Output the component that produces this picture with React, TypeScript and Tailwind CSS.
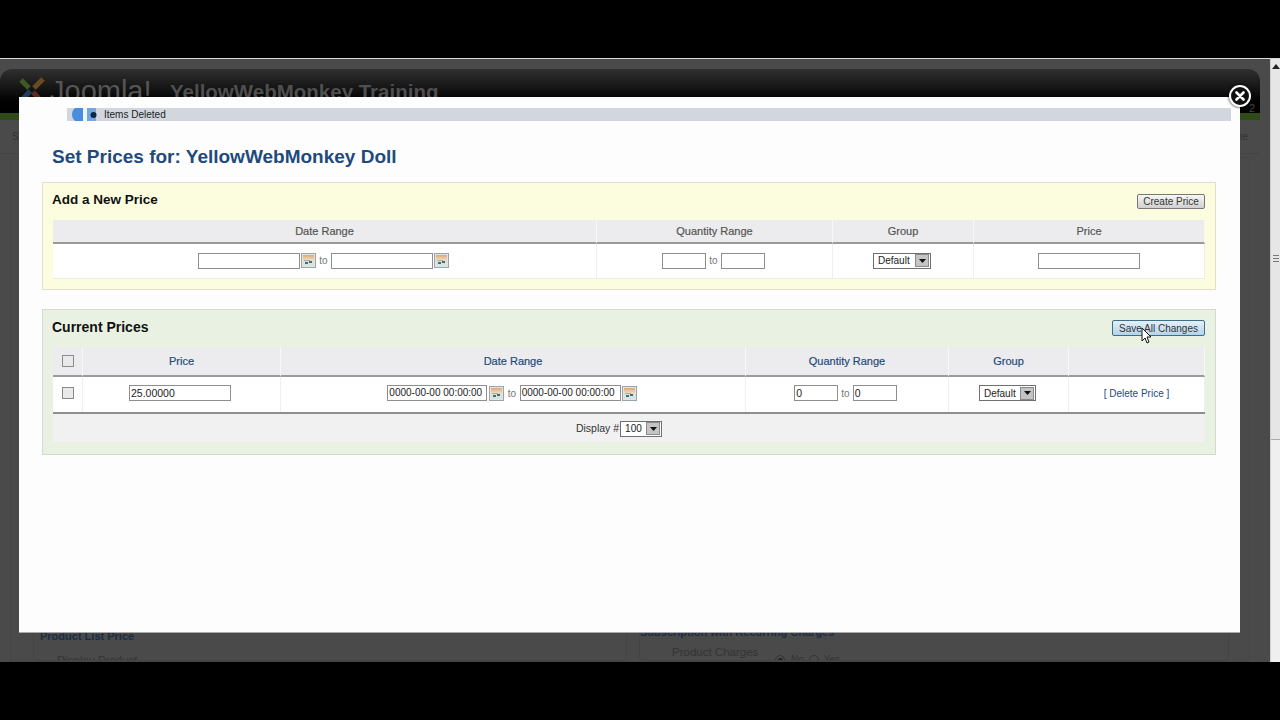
import React from "react";

const Cal = () => (
  <span className="inline-flex w-[15px] h-[15px] border border-[#98a4aa] bg-[#dfe5e8] items-center justify-center">
    <svg width="11" height="11" viewBox="0 0 11 11">
      <defs>
        <linearGradient id="calg" x1="0" y1="0" x2="0" y2="1">
          <stop offset="0" stopColor="#e2a76e" />
          <stop offset="0.45" stopColor="#ecdcc4" />
          <stop offset="1" stopColor="#cfe6ea" />
        </linearGradient>
      </defs>
      <rect x="0" y="0" width="11" height="11" fill="url(#calg)" />
      <rect x="1" y="5" width="6" height="1" fill="#a3aeb0" />
      <rect x="2" y="7" width="3" height="2" fill="#3f7177" />
      <rect x="6" y="6" width="3" height="2" fill="#3f7177" />
    </svg>
  </span>
);

const Select = ({ label, w }: { label: string; w: string }) => (
  <span className={`inline-flex items-center h-[16px] border border-[#6f6f6f] bg-white ${w} justify-between text-[10px] text-[#222] pl-[4px] pr-px`}>
    <span>{label}</span>
    <span className="w-[14px] h-[13px] bg-[#c4c4c4] border border-[#8a8a8a] flex items-center justify-center">
      <svg width="7" height="4" viewBox="0 0 7 4"><path d="M0 0h7L3.500 4z" fill="#111" /></svg>
    </span>
  </span>
);

const Input = ({ w, value, size }: { w: string; value?: string; size?: string }) => (
  <span className={`inline-flex items-center h-[16px] ${w} border border-[#8e8e8e] bg-white ${size ?? "text-[10.5px]"} text-[#222] pl-px leading-none`}>{value}</span>
);

const Check = () => <span className="inline-block w-[12px] h-[12px] border border-[#8a8a8a] bg-[#e9e9e9]" />;

const To = ({ m }: { m: string }) => <span className={`text-[10px] text-[#777] ${m}`}>to</span>;

const Th = ({ children, blue }: { children?: React.ReactNode; blue?: boolean }) => (
  <div className={`flex items-center justify-center bg-[#ececee] border-b-2 border-[#9a9a9a] border-r border-r-[#f7f7f7] h-full text-[11px] ${blue ? "text-[#1f4a7c]" : "text-[#555]"} [-webkit-text-stroke:0.2px]`}>{children}</div>
);

const Td = ({ children, up }: { children?: React.ReactNode; up?: boolean }) => (
  <div className={`flex items-center justify-center border-r border-[#efefef] bg-white ${up ? "pb-[3px]" : "pb-px"}`}>{children}</div>
);

export default function App() {
  return (
    <div className="relative w-[1280px] h-[720px] bg-black overflow-hidden font-['Liberation_Sans',Arial,sans-serif]">
      <div className="h-[58px]" />
      <div className="h-px bg-[#d8d8d8]" />
      <div className="flex h-[603px]">
        {/* dimmed page */}
        <div className="w-[1270px] bg-[#4a4a4a] flex flex-col overflow-hidden">
          <div className="h-[10px] shrink-0" />
          <div className="shrink-0 mr-[10px] h-[44px] rounded-t-[12px] bg-gradient-to-b from-[#303030] via-[#111] to-[#000] pt-[8px] pl-[17px] flex items-start text-[#4e4e4e]">
            <svg width="30" height="30" viewBox="0 0 30 30" className="shrink-0 -mt-[2px]">
              <path d="M4 5l8 8" stroke="#3d5a25" strokeWidth="5" fill="none" />
              <path d="M26 4l-9 9" stroke="#6b4a20" strokeWidth="5" fill="none" />
              <path d="M5 25l8-9" stroke="#1f3f5c" strokeWidth="5" fill="none" />
              <path d="M24 26l-8-9" stroke="#5c2a20" strokeWidth="5" fill="none" />
            </svg>
            <span className="ml-[3px] w-[120px] text-[29px] leading-[28px] text-[#555]">Joomla!</span>
            <span className="text-[20.5px] leading-[30px] font-bold text-[#4f4f4f]">YellowWebMonkey Training</span>
            <span className="ml-auto mr-[5px] mt-[24px] flex gap-[46px] text-[11px] leading-[14px] text-[#444]"><span>M</span><span>2</span></span>
          </div>
          <div className="shrink-0 mr-[10px] h-[7px] bg-[#2f4a16]" />
          <div className="shrink-0 h-[34px] mr-[10px] border-b border-[#444] flex justify-between items-center px-[12px] text-[10px] text-[#333]">
            <span>S</span><span>ne</span>
          </div>
          <div className="flex-1 min-h-0 ml-[10px] mr-[20px] mt-[3px] border border-[#454545] rounded-t-[5px] flex gap-[12px] pl-[22px] pt-[6px] overflow-hidden">
            <div className="w-[594px] border border-[#444] rounded-[4px] flex flex-col justify-end pl-[6px] overflow-hidden">
              <div className="text-[11px] font-bold text-[#1c2d42] leading-[14px]">Product List Price</div>
              <div className="text-[11.5px] text-[#333] pl-[17px] pt-[10px] leading-[14px] -mb-[7px]">Display Product</div>
            </div>
            <div className="w-[590px] border border-[#444] rounded-[4px] flex flex-col justify-end overflow-hidden">
              <div className="text-[11px] font-bold text-[#1c2d42] leading-[14px]">Subscription with Recurring Charges</div>
              <div className="text-[11.5px] text-[#333] leading-[14px] flex items-start pl-[32px] pt-[6px] -mb-[7px]">
                <span className="w-[103px]">Product Charges</span>
                <span className="flex items-center text-[10px] mt-[8px]">
                  <span className="w-[10px] h-[10px] rounded-full border border-[#333] flex items-center justify-center"><span className="w-[5px] h-[5px] rounded-full bg-[#222]" /></span>
                  <span className="ml-[6px]">No</span>
                  <span className="w-[10px] h-[10px] rounded-full border border-[#333] ml-[5px]" />
                  <span className="ml-[5px]">Yes</span>
                </span>
              </div>
            </div>
          </div>
        </div>
        {/* scrollbar */}
        <div className="w-[10px] bg-[#efefef] border-l border-[#cfcfcf] flex flex-col">
          <div className="h-[381px] bg-[#e6e6e6] border-b border-[#aaa] flex flex-col items-center pt-[5px] relative">
            <svg width="8" height="5" viewBox="0 0 8 5"><path d="M0 5h8L4 0z" fill="#222" /></svg>
            <div className="absolute top-[196px] left-[2px] w-[6px] h-[7px] flex flex-col justify-between">
              <span className="h-px bg-[#777]" /><span className="h-px bg-[#777]" /><span className="h-px bg-[#777]" />
            </div>
          </div>
        </div>
      </div>

      {/* modal */}
      <div className="absolute left-[19px] top-[97px] w-[1221px] h-[535px] bg-[#fdfdfd] shadow-[0_1px_0_#aaa] flex flex-col">
        <div className="ml-[48px] mr-[9px] mt-[11px] h-[13px] bg-[#d2d7df] flex items-center text-[10px] text-[#222] shrink-0">
          <svg width="26" height="13" viewBox="0 0 26 13" className="ml-[5px]">
            <path d="M3 0h8v13H3C1 11 0 9 0 6.500S1 2 3 0z" fill="#4a8de0" />
            <rect x="11" y="0" width="4" height="13" fill="#f2f6fc" />
            <rect x="15" y="0" width="5" height="13" fill="#6fa8e6" />
            <path d="M20 0h4v13h-4z" fill="#7fa6d6" />
            <circle cx="21.500" cy="7" r="3" fill="#10253f" />
          </svg>
          <span className="ml-[6px]">Items Deleted</span>
        </div>
        <h1 className="ml-[33px] mt-[24px] text-[19px] leading-[24px] font-bold text-[#1f4a7c] shrink-0">Set Prices for: YellowWebMonkey Doll</h1>

        {/* Add */}
        <section className="ml-[23px] mr-[24px] mt-[13px] h-[108px] bg-[#fcfcdf] border border-[#e2e0c8] px-[10px] flex flex-col shrink-0">
          <div className="h-[37px] flex items-center justify-between">
            <span className="text-[13.5px] font-bold text-[#111] -mt-[3px] -ml-px">Add a New Price</span>
            <span className="h-[15px] w-[68px] rounded-[2px] border border-[#777] bg-gradient-to-b from-[#f7f7f7] to-[#d0d0d0] text-[10px] text-[#333] flex items-center justify-center -mt-[1px]">Create Price</span>
          </div>
          <div className="grid grid-cols-[544px_236px_141px_231px] grid-rows-[24px_34px] border-b border-[#ececec]">
            <Th>Date Range</Th><Th>Quantity Range</Th><Th>Group</Th><Th>Price</Th>
            <Td><span className="flex -ml-[2px]"><Input w="w-[102px]" /></span><span className="flex ml-px"><Cal /></span><To m="mx-[3px]" /><Input w="w-[102px]" /><span className="flex ml-px"><Cal /></span></Td>
            <Td><span className="flex -ml-[2px]"><Input w="w-[44px]" /></span><To m="mx-[3px]" /><Input w="w-[44px]" /></Td>
            <Td><span className="flex -ml-[2px]"><Select label="Default" w="w-[58px]" /></span></Td>
            <Td><Input w="w-[102px]" /></Td>
          </div>
        </section>

        {/* Current */}
        <section className="ml-[23px] mr-[24px] mt-[19px] h-[146px] bg-[#e9f1e2] border border-[#d5d9d0] px-[10px] flex flex-col shrink-0">
          <div className="h-[37px] flex items-center justify-between">
            <span className="text-[14px] font-bold text-[#111] -mt-[3px] -ml-px">Current Prices</span>
            <span className="relative h-[16px] w-[93px] rounded-[2px] border border-[#3c6f8c] bg-gradient-to-b from-[#e4f0f8] to-[#b5d3e8] text-[10px] text-[#333] flex items-center justify-center -mt-[1px]">Save All Changes
              <svg width="12" height="18" viewBox="0 0 12 18" className="absolute left-[28px] top-[6px]">
                <path d="M1 1v13l3-3 2 5 2-1-2-5h4z" fill="#fff" stroke="#111" strokeWidth="1" />
              </svg>
            </span>
          </div>
          <div className="grid grid-cols-[30px_198px_465px_203px_120px_136px] grid-rows-[30px_35px_30px]">
            <Th><Check /></Th><Th blue>Price</Th><Th blue>Date Range</Th><Th blue>Quantity Range</Th><Th blue>Group</Th><Th />
            <Td up><Check /></Td>
            <Td up><span className="flex -ml-[3px]"><Input w="w-[102px]" value="25.00000" /></span></Td>
            <Td up><span className="flex -ml-[2px]"><Input w="w-[100px]" size="text-[10px]" value="0000-00-00 00:00:00" /></span><span className="flex ml-[2px]"><Cal /></span><To m="mx-[3.5px]" /><Input w="w-[101px]" size="text-[10px]" value="0000-00-00 00:00:00" /><span className="flex ml-px"><Cal /></span></Td>
            <Td up><span className="flex -ml-[3px]"><Input w="w-[44px]" value="0" /></span><To m="mx-[3px]" /><Input w="w-[44px]" value="0" /></Td>
            <Td up><span className="flex -ml-[2px]"><Select label="Default" w="w-[57px]" /></span></Td>
            <Td up><span className="text-[10px] text-[#1f4a7c]">[ Delete Price ]</span></Td>
            <div className="col-span-6 border-t-2 border-[#8f8f8f] bg-[#f1f1f1] flex items-center justify-center text-[10.5px] text-[#333] gap-px pt-px">
              <span className="mr-[20px] flex items-center gap-px"><span>Display #</span><Select label="100" w="w-[42px]" /></span>
            </div>
          </div>
        </section>
      </div>

      {/* close */}
      <div className="absolute left-[1229px] top-[85px] w-[22px] h-[22px] rounded-full bg-[#111] border-2 border-white shadow-[0_0_3px_#000] flex items-center justify-center">
        <svg width="10" height="10" viewBox="0 0 10 10"><path d="M1.500 1.500l7 7M8.500 1.500l-7 7" stroke="#fff" strokeWidth="2.600" strokeLinecap="round" /></svg>
      </div>
    </div>
  );
}
